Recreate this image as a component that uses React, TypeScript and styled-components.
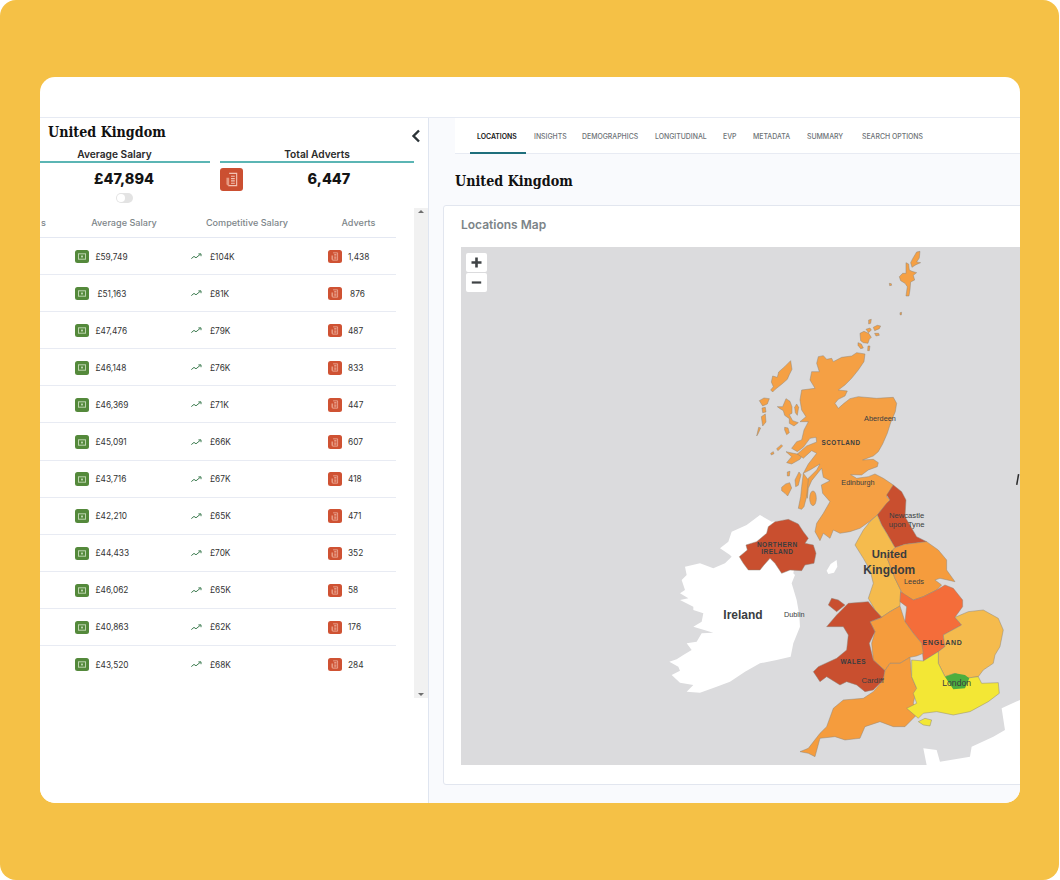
import React from "react";
import styled, { createGlobalStyle } from "styled-components";

const GlobalStyle = createGlobalStyle`
  html, body {
    margin: 0;
    padding: 0;
    background: #fff;
    font-family: "Inter", "Liberation Sans", sans-serif;
  }
`;

const slab = `"DejaVu Serif", "Liberation Serif", serif`;

const Frame = styled.div`
  width: 1059px;
  height: 880px;
  box-sizing: border-box;
  padding: 77px 39px 77px 40px;
  background: #f5c146;
  border-radius: 16px;
  overflow: hidden;
`;

const Card = styled.div`
  height: 726px;
  display: flex;
  flex-direction: column;
  background: #fff;
  border-radius: 15px;
  overflow: hidden;
`;

const TopStrip = styled.div`
  height: 40px;
  flex: none;
  border-bottom: 1px solid #e6eaf3;
`;

const Panels = styled.div`
  flex: 1;
  display: flex;
  min-height: 0;
`;

const LeftPanel = styled.aside`
  width: 388px;
  flex: none;
  display: flex;
  flex-direction: column;
  border-right: 1px solid #dfe5f0;
  background: #fff;
`;

const TitleRow = styled.div`
  height: 30px;
  display: flex;
  align-items: center;
  justify-content: space-between;
  padding: 0 7px 2px 8px;
  box-sizing: border-box;
  svg {
    margin-top: 8px;
  }
`;

const Title = styled.h1`
  margin: 0;
  font: 700 14.2px ${slab};
  font-stretch: condensed;
  color: #111;
`;

const Stats = styled.div`
  display: grid;
  grid-template-columns: 170px 194px;
  column-gap: 10px;
  height: 60px;
`;

const Stat = styled.div`
  display: flex;
  flex-direction: column;
`;

const StatLabel = styled.div<{ $inset?: number }>`
  height: 13px;
  padding-right: ${(p) => p.$inset ?? 0}px;
  text-align: center;
  font-size: 10.2px;
  line-height: 12px;
  font-weight: 600;
  color: #2a2a2a;
  border-bottom: 2px solid #5bb5b4;
`;

const StatBody = styled.div`
  display: flex;
  align-items: flex-start;
  padding-top: 5px;
  position: relative;
`;

const StatValue = styled.div<{ $width: number; $left: number }>`
  width: ${(p) => p.$width}px;
  margin-left: ${(p) => p.$left}px;
  text-align: center;
  font-size: 14.5px;
  line-height: 22px;
  font-weight: 800;
  color: #141414;
`;

const BigBadge = styled.div`
  width: 23px;
  height: 23px;
  flex: none;
  display: flex;
  align-items: center;
  justify-content: center;
  background: #cb4f31;
  border-radius: 3px;
`;

const Toggle = styled.div`
  position: absolute;
  left: 76px;
  top: 30px;
  width: 17px;
  height: 10px;
  border-radius: 5px;
  background: #e3e3e3;
  &::after {
    content: "";
    position: absolute;
    left: 1px;
    top: 1px;
    width: 8px;
    height: 8px;
    border-radius: 50%;
    background: #fff;
  }
`;

const TableArea = styled.div`
  display: flex;
  height: 490px;
`;

const Table = styled.div`
  width: 356px;
  flex: none;
`;

const HeadRow = styled.div`
  height: 29px;
  display: grid;
  grid-template-columns: 35px 98px 148px 75px;
  align-items: center;
  border-bottom: 1px solid #e4e8f2;
  font-size: 9.1px;
  font-weight: 500;
  color: #7d8589;
  text-align: center;
  white-space: nowrap;
  & > span:first-child {
    text-align: left;
    padding-left: 1px;
  }
`;

const Row = styled.div`
  height: 35.1px;
  display: grid;
  grid-template-columns: 116px 137px 68px;
  align-items: center;
  padding: 1px 0 0 35px;
  border-bottom: 1px solid #e8ebf3;
  font-size: 8.3px;
  color: #333;
  &:last-child {
    border-bottom: none;
  }
`;

const Cell = styled.div`
  display: flex;
  align-items: center;
`;

const MiniBadge = styled.div<{ $tone: "green" | "red" }>`
  width: 13.5px;
  height: 13.5px;
  flex: none;
  display: flex;
  align-items: center;
  justify-content: center;
  border-radius: 2.5px;
  background: ${(p) => (p.$tone === "green" ? "#54893b" : "#cf5233")};
`;

const CellValue = styled.span<{ $gap: number }>`
  margin-left: ${(p) => p.$gap}px;
`;

const Scrollbar = styled.div`
  width: 14px;
  margin-left: 18px;
  flex: none;
  background: #f1f1f1;
  display: flex;
  flex-direction: column;
  align-items: center;
  justify-content: space-between;
  padding: 2px 0 2px;
  box-sizing: border-box;
`;

const Arrow = styled.div<{ $down?: boolean }>`
  width: 0;
  height: 0;
  border-left: 3px solid transparent;
  border-right: 3px solid transparent;
  ${(p) => (p.$down ? "border-top: 3px solid #6f6f6f;" : "border-bottom: 3px solid #6f6f6f;")}
`;

const RightPanel = styled.main`
  flex: 1;
  min-width: 0;
  display: flex;
  flex-direction: column;
  background: #f9fafd;
  padding-left: 14px;
`;

const TabBar = styled.nav`
  height: 35px;
  margin-left: 12px;
  padding-left: 15px;
  display: flex;
  background: #fff;
  border-bottom: 1px solid #e8ebf3;
`;

const Tab = styled.div<{ $width: number; $active?: boolean }>`
  width: ${(p) => p.$width}px;
  flex: none;
  box-sizing: border-box;
  padding-left: 7px;
  line-height: 37px;
  font-size: 6.9px;
  font-weight: ${(p) => (p.$active ? 600 : 500)};
  white-space: nowrap;
  color: ${(p) => (p.$active ? "#151515" : "#6d7276")};
  position: relative;
  ${(p) =>
    p.$active &&
    `&::after {
      content: "";
      position: absolute;
      left: 0;
      bottom: -1px;
      width: 56px;
      height: 2px;
      background: #1f6f7c;
    }`}
`;

const PageTitle = styled.h2`
  margin: 0;
  height: 51px;
  padding-left: 12px;
  font: 700 14.2px/54px ${slab};
  font-stretch: condensed;
  color: #111;
`;

const MapCard = styled.section`
  height: 580px;
  box-sizing: border-box;
  margin-right: -6px;
  background: #fff;
  border: 1px solid #e2e6ef;
  border-radius: 3px;
  padding: 0 0 19px 17px;
  display: flex;
  flex-direction: column;
`;

const MapTitle = styled.h3`
  margin: 0;
  height: 41px;
  flex: none;
  font-size: 12px;
  line-height: 38px;
  font-weight: 600;
  color: #7c8488;
`;

const MapArea = styled.div`
  position: relative;
  height: 518px;
  background: #dbdbdd;
  overflow: hidden;
  svg {
    display: block;
  }
`;

const ZoomButtons = styled.div`
  position: absolute;
  left: 5px;
  top: 6px;
  display: flex;
  flex-direction: column;
  gap: 1px;
`;

const ZoomButton = styled.div`
  width: 21px;
  height: 19px;
  background: #fff;
  border-radius: 2px;
  display: flex;
  align-items: center;
  justify-content: center;
  color: #3f4345;
`;

type RowData = { avg: string; avgGap: number; comp: string; adverts: string; advGap: number };

const rows: RowData[] = [
  { avg: "£59,749", avgGap: 7, comp: "£104K", adverts: "1,438", advGap: 6.5 },
  { avg: "£51,163", avgGap: 9, comp: "£81K", adverts: "876", advGap: 8.5 },
  { avg: "£47,476", avgGap: 7, comp: "£79K", adverts: "487", advGap: 6.5 },
  { avg: "£46,148", avgGap: 7, comp: "£76K", adverts: "833", advGap: 6.5 },
  { avg: "£46,369", avgGap: 7, comp: "£71K", adverts: "447", advGap: 6.5 },
  { avg: "£45,091", avgGap: 7, comp: "£66K", adverts: "607", advGap: 6.5 },
  { avg: "£43,716", avgGap: 7, comp: "£67K", adverts: "418", advGap: 6.5 },
  { avg: "£42,210", avgGap: 7, comp: "£65K", adverts: "471", advGap: 6.5 },
  { avg: "£44,433", avgGap: 7, comp: "£70K", adverts: "352", advGap: 6.5 },
  { avg: "£46,062", avgGap: 7, comp: "£65K", adverts: "58", advGap: 6.5 },
  { avg: "£40,863", avgGap: 7, comp: "£62K", adverts: "176", advGap: 6.5 },
  { avg: "£43,520", avgGap: 7, comp: "£68K", adverts: "284", advGap: 6.5 },
];

const tabs: [string, number][] = [
  ["LOCATIONS", 57],
  ["INSIGHTS", 48],
  ["DEMOGRAPHICS", 73],
  ["LONGITUDINAL", 68],
  ["EVP", 30],
  ["METADATA", 54],
  ["SUMMARY", 55],
  ["SEARCH OPTIONS", 80],
];

const Money = () => (
  <svg width="8" height="7" viewBox="0 0 8 7" fill="none" stroke="#bcd4ae" strokeWidth="1">
    <rect x="0.5" y="0.8" width="7" height="5.4" />
    <rect x="3" y="2.6" width="2" height="1.8" fill="#bcd4ae" stroke="none" />
  </svg>
);

const Papers = ({ size }: { size: number }) => (
  <svg width={size} height={size} viewBox="0 0 16 16" fill="none" stroke="#f3c4b4" strokeWidth="1.2">
    <path d="M5.5 1.5h8v13h-9" />
    <path d="M7.5 4.5h4M7.5 7h4M7.5 9.5h4M7.5 12h4" />
    <path d="M4.5 6H2.6v6.5c0 1.1.9 2 2 2h.9V6z" fill="#e79a82" stroke="none" />
  </svg>
);

const Trend = () => (
  <svg width="11" height="7" viewBox="0 0 11 7" fill="none" stroke="#3f7d52" strokeWidth="1">
    <path d="M0.3 5.6 3 3.4l2 1.4 4.4-3.6" />
    <path d="M7.4 0.9h2.6v2.3" />
  </svg>
);

const Chevron = () => (
  <svg width="10" height="14" viewBox="0 0 10 14" fill="none" stroke="#2c3438" strokeWidth="2.4">
    <path d="M8 1.5 2.5 7 8 12.5" />
  </svg>
);

// map outlines are traced against 3x crops of the map, hence the scaled groups
const Region = styled.polygon.attrs({ stroke: "#8a837a", strokeWidth: 1.4, strokeLinejoin: "round" })``;

const Label = styled.text<{ $size: number; $weight?: number; $spacing?: number }>`
  font-family: "Liberation Sans", Arial, sans-serif;
  font-size: ${(p) => p.$size}px;
  font-weight: ${(p) => p.$weight ?? 400};
  letter-spacing: ${(p) => p.$spacing ?? 0}px;
  fill: #3a3d40;
  text-anchor: middle;
`;

const scotlandFill = "#f5a044";

const scotland =
  "475,350 490,347 500,358 515,355 520,365 545,352 575,348 590,338 615,342 612,365 595,390 575,415 555,435 535,450 562,453 555,468 535,478 525,490 535,505 552,490 570,476 595,470 650,475 700,472 710,490 706,515 692,548 682,580 668,612 655,635 640,648 608,660 640,658 655,668 652,680 625,690 605,705 572,704 590,715 625,710 645,702 670,715 700,735 680,770 690,780 652,825 628,845 600,865 570,875 540,880 520,870 510,895 490,880 480,902 465,875 470,850 490,820 510,785 488,760 484,735 510,722 490,712 485,685 455,722 445,745 442,775 432,745 445,715 470,690 480,672 450,690 430,700 445,672 470,640 455,632 430,655 412,642 440,618 470,606 468,592 450,595 430,622 412,635 395,625 410,605 425,600 432,570 445,545 420,545 438,530 425,510 420,480 425,450 465,445 450,420 455,395 478,395 470,370";

const NorthMap = () => (
  <g transform="translate(199 -7) scale(0.3333)" fill={scotlandFill}>
    {/* Shetland */}
    <Region points="770,36 780,34 778,54 770,66 782,68 768,74 756,82 752,68 758,56" />
    <Region points="738,68 746,72 748,90 756,94 770,98 760,106 764,120 752,126 750,150 747,168 738,168 742,140 735,130 722,122 718,110 728,100 738,100" />
    <Region points="688,130 694,131 695,136 689,137" />
    <Region points="720,218 725,217 724,225 720,224" />
    {/* Orkney */}
    <Region points="600,280 612,274 626,280 634,292 628,298 624,310 610,308 602,302" />
    <Region points="594,308 604,312 610,324 602,326 594,316" />
    <Region points="618,268 630,264 634,270 626,278" />
    <Region points="640,262 652,256 662,258 658,266 644,272" />
    <Region points="626,240 634,238 632,250 626,252" />
    <Region points="624,318 630,318 628,332 623,332" />
    <Region points="644,280 656,280 658,286 648,288" />
    {/* Hebrides */}
    <Region points="392,362 396,388 388,404 382,418 366,432 346,448 338,456 332,450 340,440 334,426 338,408 352,412 356,396 374,380" />
    <Region points="298,482 312,474 328,476 322,492 308,498" />
    <Region points="306,504 316,502 318,516 308,518" />
    <Region points="304,530 316,522 318,546 308,558" />
    <Region points="296,562 302,564 294,582 290,588" />
    {/* Skye */}
    <Region points="352,500 368,500 378,476 390,484 396,500 396,520 388,524 398,542 415,548 402,558 388,550 388,536 374,526 370,512 360,506" />
    <Region points="374,562 384,564 388,578 380,584 374,570" />
    <Region points="404,502 410,492 416,502 412,526 406,518" />
    {/* Mull, Jura, Islay */}
    <Region points="380,668 395,650 378,635 400,640 428,645 420,658 395,672" />
    <Region points="332,640 340,635 342,641 334,645" />
    <Region points="350,626 364,614 368,618 354,632" />
    <Region points="382,696 390,694 388,708 382,708" />
    <Region points="405,720 417,696 423,704 415,736 407,740" />
    <Region points="365,742 377,732 389,728 395,744 383,768 375,760 365,752" />
    <ellipse cx="459" cy="775" rx="10" ry="22" stroke="#8a837a" strokeWidth="1.4" />
    {/* mainland */}
    <Region points={scotland} />
    {/* Kintyre */}
    <Region points="430,700 445,720 440,770 432,800 425,808 415,805 422,770 425,740" />
    <Label x="543" y="614" $size={19} $weight={700} $spacing={1.4}>SCOTLAND</Label>
    <Label x="660" y="544" $size={22}>Aberdeen</Label>
    <Label x="594" y="734" $size={22}>Edinburgh</Label>
  </g>
);

const SouthMap = () => (
  <g transform="translate(199 253) scale(0.3333)">
    {/* France */}
    <polygon fill="#fff" points="790,745 830,750 840,785 930,770 935,740 1000,710 1035,690 1025,625 1080,600 1080,795 800,795" />
    {/* Ireland */}
    <polygon fill="#fff" points="75,200 120,190 160,205 195,190 215,170 210,165 180,145 205,125 215,95 260,75 300,45 335,65 385,58 420,120 400,220 405,225 395,250 410,300 418,345 420,380 400,430 392,470 350,480 300,490 255,515 210,545 170,560 120,578 80,575 100,555 60,548 35,525 60,512 55,500 28,485 50,478 70,465 95,450 80,430 110,425 125,400 160,398 100,380 125,365 130,340 100,330 100,320 60,300 85,295 60,280 75,270 65,240 80,225" />
    {/* Isle of Man */}
    <polygon fill="#fff" points="505,222 500,212 512,192 530,180 532,200 522,218" />
    {/* Northern Ireland */}
    <Region fill="#c94f2f" points="238,170 262,150 258,135 290,125 320,100 325,80 345,65 385,58 415,72 430,95 445,115 435,130 460,135 468,160 462,190 435,195 425,212 390,210 365,220 345,190 330,175 312,195 300,210 265,210 250,190" />
    {/* North East */}
    <Region fill="#c94f2f" points="700,-45 725,-25 738,0 735,50 770,110 800,125 735,133 705,143 680,100 665,75 652,45 680,10 690,0 680,-15" />
    {/* North West */}
    <Region fill="#f5bb4d" points="630,65 652,45 665,75 680,100 705,143 680,170 705,235 722,270 720,318 690,335 665,352 645,330 625,295 640,250 630,210 610,175 585,135 610,90" />
    {/* Yorkshire */}
    <Region fill="#f59c3d" points="705,143 735,133 800,125 835,150 860,180 860,210 885,245 840,235 825,240 845,255 830,270 790,290 760,300 730,285 722,270 705,235 680,170" />
    {/* East Midlands */}
    <Region fill="#f46d3a" points="722,275 760,300 790,290 830,270 855,255 880,265 908,300 908,320 885,352 905,375 850,405 855,440 835,455 790,483 785,430 760,400 735,365 740,320 720,305" />
    {/* East */}
    <Region fill="#f5bb4d" points="885,352 925,335 970,330 1015,355 1030,390 1020,440 1005,465 1000,490 970,510 955,530 915,535 885,520 855,530 845,510 835,490 835,455 855,440 850,405 905,375" />
    {/* West Midlands */}
    <Region fill="#f59c3d" points="720,318 735,365 760,400 785,430 790,460 770,468 750,472 720,490 690,490 675,512 640,480 635,430 645,395 630,365 660,355 690,335" />
    {/* Wales */}
    <Region fill="#c94f2f" points="565,310 625,305 645,330 665,352 630,365 645,395 628,430 640,480 675,512 670,540 640,570 615,575 590,555 560,545 540,555 500,530 480,545 460,515 475,500 530,475 560,450 565,405 550,380 500,380 530,345" />
    <Region fill="#c94f2f" points="505,315 515,295 535,300 555,315 530,335" />
    {/* South West */}
    <Region fill="#f59c3d" points="675,512 690,490 720,490 750,472 755,530 770,565 760,610 775,640 760,655 735,680 700,680 660,665 615,680 600,715 555,720 525,710 480,715 465,770 445,760 420,755 445,745 480,700 500,680 520,625 550,600 610,595 640,575 670,540" />
    {/* South East */}
    <Region fill="#f3e735" points="755,480 790,483 835,455 835,490 845,510 855,530 885,520 915,535 955,530 965,550 1015,548 1018,580 985,605 930,635 880,645 830,635 790,640 775,655 740,625 770,610 760,580 770,565 755,530" />
    <Region fill="#f3e735" points="775,665 795,655 815,660 810,678 790,675" />
    {/* London */}
    <polygon fill="#4dae3e" points="855,530 885,520 915,525 928,535 915,565 880,568 865,545" />
    <Label x="249" y="358" $size={36} $weight={700}>Ireland</Label>
    <Label x="403" y="352" $size={22}>Dublin</Label>
    <Label x="352" y="142" $size={19.5} $weight={700} $spacing={1.5}>NORTHERN</Label>
    <Label x="352" y="161" $size={19.5} $weight={700} $spacing={1.5}>IRELAND</Label>
    <Label x="740" y="55" $size={23}>Newcastle</Label>
    <Label x="740" y="81" $size={23}>upon Tyne</Label>
    <Label x="688" y="175" $size={34} $weight={700}>United</Label>
    <Label x="688" y="221" $size={36} $weight={700}>Kingdom</Label>
    <Label x="762" y="253" $size={22}>Leeds</Label>
    <Label x="848" y="435" $size={21} $weight={700} $spacing={2.4}>ENGLAND</Label>
    <Label x="580" y="491" $size={19.5} $weight={700} $spacing={1.5}>WALES</Label>
    <Label x="638" y="548" $size={23}>Cardiff</Label>
    <Label x="890" y="557" $size={26}>London</Label>
  </g>
);

export default function App() {
  return (
    <>
      <GlobalStyle />
      <Frame>
        <Card>
          <TopStrip />
          <Panels>
            <LeftPanel>
              <TitleRow>
                <Title>United Kingdom</Title>
                <Chevron />
              </TitleRow>
              <Stats>
                <Stat>
                  <StatLabel $inset={21}>Average Salary</StatLabel>
                  <StatBody>
                    <StatValue $width={80} $left={44}>£47,894</StatValue>
                    <Toggle />
                  </StatBody>
                </Stat>
                <Stat>
                  <StatLabel>Total Adverts</StatLabel>
                  <StatBody>
                    <BigBadge>
                      <Papers size={15} />
                    </BigBadge>
                    <StatValue $width={60} $left={56}>6,447</StatValue>
                  </StatBody>
                </Stat>
              </Stats>
              <TableArea>
                <Table>
                  <HeadRow>
                    <span>s</span>
                    <span>Average Salary</span>
                    <span>Competitive Salary</span>
                    <span>Adverts</span>
                  </HeadRow>
                  {rows.map((r) => (
                    <Row key={r.avg}>
                      <Cell>
                        <MiniBadge $tone="green">
                          <Money />
                        </MiniBadge>
                        <CellValue $gap={r.avgGap}>{r.avg}</CellValue>
                      </Cell>
                      <Cell>
                        <Trend />
                        <CellValue $gap={8}>{r.comp}</CellValue>
                      </Cell>
                      <Cell>
                        <MiniBadge $tone="red">
                          <Papers size={9} />
                        </MiniBadge>
                        <CellValue $gap={r.advGap}>{r.adverts}</CellValue>
                      </Cell>
                    </Row>
                  ))}
                </Table>
                <Scrollbar>
                  <Arrow />
                  <Arrow $down />
                </Scrollbar>
              </TableArea>
            </LeftPanel>
            <RightPanel>
              <TabBar>
                {tabs.map(([name, width], i) => (
                  <Tab key={name} $width={width} $active={i === 0}>
                    {name}
                  </Tab>
                ))}
              </TabBar>
              <PageTitle>United Kingdom</PageTitle>
              <MapCard>
                <MapTitle>Locations Map</MapTitle>
                <MapArea>
                  <svg width="559" height="518" viewBox="0 0 559 518">
                    <NorthMap />
                    <SouthMap />
                    <rect x="556" y="227" width="1.5" height="11" fill="#2b2b2b" transform="rotate(10 557 232)" />
                  </svg>
                  <ZoomButtons>
                    <ZoomButton>
                      <svg width="11" height="11" viewBox="0 0 11 11" fill="currentColor">
                        <path d="M4.2 0.5h2.6v3.7h3.7v2.6H6.8v3.7H4.2V6.8H.5V4.2h3.7z" />
                      </svg>
                    </ZoomButton>
                    <ZoomButton>
                      <svg width="11" height="11" viewBox="0 0 11 11" fill="currentColor">
                        <rect x="0.8" y="4.4" width="9.4" height="2.2" />
                      </svg>
                    </ZoomButton>
                  </ZoomButtons>
                </MapArea>
              </MapCard>
            </RightPanel>
          </Panels>
        </Card>
      </Frame>
    </>
  );
}
